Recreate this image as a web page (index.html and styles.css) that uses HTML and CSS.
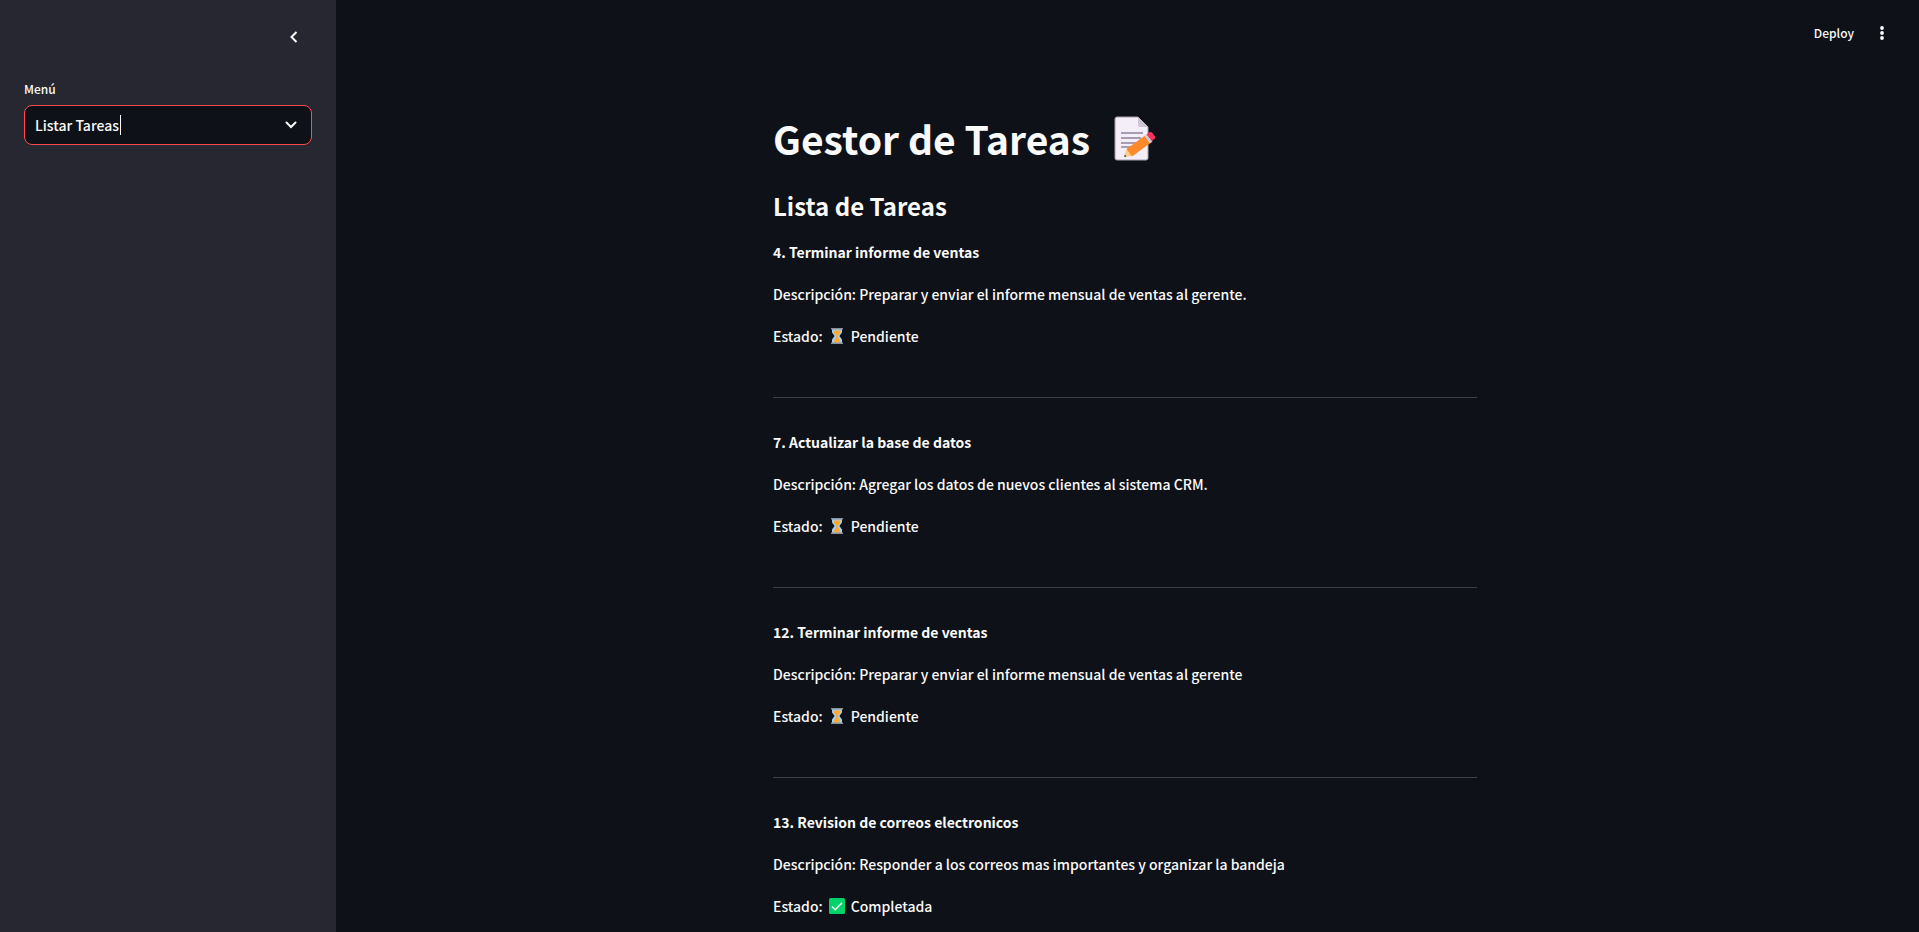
FILE: index.html
```html
<!DOCTYPE html>
<html lang="es">
<head>
<meta charset="utf-8">
<meta name="viewport" content="width=device-width, initial-scale=1">
<title>Gestor de Tareas</title>
<link rel="stylesheet" href="styles.css">
</head>
<body>
<svg class="defs" aria-hidden="true">
  <symbol id="hourglass" viewBox="0 0 16 18">
    <path d="M3 2h10v3.500L10.400 9l2.600 3.500V16H3v-3.500L5.600 9 3 5.500z" fill="#9fd0fa"/>
    <path d="M4.500 3.500h7v1.900L9 8.500v1.700l2 3.300v2H5v-2l2-3.300V8.500L4.500 5.400z" fill="#ffa92e"/>
    <path d="M2 1h12v1.500H2zM2 15.500h12V17H2z" fill="#8b9199"/>
  </symbol>
  <symbol id="check" viewBox="0 0 16 18">
    <rect x="0" y="1" width="16" height="16" rx="1.500" fill="#00d26a"/>
    <path d="M3 9.500l3.300 3.200L13 5.800" fill="none" stroke="#fff" stroke-width="1.600"/>
  </symbol>
</svg>
<div class="app">
  <aside class="sidebar">
    <div class="sidebar-header">
      <button class="icon-button" type="button" aria-label="Cerrar barra lateral">
        <svg width="20" height="20" viewBox="0 0 20 20"><path d="M12.500 5L7.500 10l5 5" fill="none" stroke="#fafafa" stroke-width="2"/></svg>
      </button>
    </div>
    <div class="field">
      <label for="menu">Menú</label>
      <div class="select-box">
        <select id="menu">
          <option selected>Listar Tareas</option>
          <option>Agregar Tarea</option>
        </select>
        <span class="caret"></span>
        <svg class="chevron" width="16" height="16" viewBox="0 0 16 16"><path d="M3.500 5.500L8 10l4.500-4.500" fill="none" stroke="#fafafa" stroke-width="2" stroke-linecap="round"/></svg>
      </div>
    </div>
  </aside>
  <div class="main">
    <header class="toolbar">
      <button class="deploy" type="button">Deploy</button>
      <button class="icon-button" type="button" aria-label="Menú principal">
        <svg width="20" height="20" viewBox="0 0 20 20" fill="#fafafa"><circle cx="10" cy="5" r="1.900"/><circle cx="10" cy="10" r="1.900"/><circle cx="10" cy="15" r="1.900"/></svg>
      </button>
    </header>
    <main class="content">
      <h1>Gestor de Tareas
        <svg class="memo" width="44" height="48" viewBox="0 0 44 48" role="img" aria-label="Nota">
          <path d="M4 2h21l10 10v31a2 2 0 0 1-2 2H4a2 2 0 0 1-2-2V4a2 2 0 0 1 2-2z" fill="#f3eef8" stroke="#a69fb0"/>
          <path d="M25 2l10 10H27a2 2 0 0 1-2-2z" fill="#cdc4d6"/>
          <path d="M8 18h22M8 23h20M8 28h15M8 32h10" stroke="#a79cb2" stroke-width="1.800"/>
          <path d="M11 42l3-9 5 8z" fill="#ffcf85"/>
          <path d="M11 42l1-2.500 1.500 2z" fill="#433b6b"/>
          <path d="M13.500 34L32 20.500l5.500 7.500L19 41.500z" fill="#ff8a2e"/>
          <path d="M31.500 21l2.500-2 5.500 7.500-2.500 2z" fill="#d3cdd8"/>
          <path d="M33.500 19.500l3-2.200c1-.7 2-.5 2.800.5l2.500 3.500c.7 1 .5 2-.5 2.800l-2.500 2z" fill="#f8315f"/>
        </svg>
      </h1>
      <h2>Lista de Tareas</h2>
      <section class="task">
        <p><strong>4. Terminar informe de ventas</strong></p>
        <p>Descripción: Preparar y enviar el informe mensual de ventas al gerente.</p>
        <p class="status">Estado: <svg class="emoji"><use href="#hourglass"/></svg> Pendiente</p>
      </section>
      <hr>
      <section class="task">
        <p><strong>7. Actualizar la base de datos</strong></p>
        <p>Descripción: Agregar los datos de nuevos clientes al sistema CRM.</p>
        <p class="status">Estado: <svg class="emoji"><use href="#hourglass"/></svg> Pendiente</p>
      </section>
      <hr>
      <section class="task">
        <p><strong>12. Terminar informe de ventas</strong></p>
        <p>Descripción: Preparar y enviar el informe mensual de ventas al gerente</p>
        <p class="status">Estado: <svg class="emoji"><use href="#hourglass"/></svg> Pendiente</p>
      </section>
      <hr>
      <section class="task">
        <p><strong>13. Revision de correos electronicos</strong></p>
        <p>Descripción: Responder a los correos mas importantes y organizar la bandeja</p>
        <p class="status">Estado: <svg class="emoji"><use href="#check"/></svg> Completada</p>
      </section>
    </main>
  </div>
</div>
</body>
</html>
```
FILE: styles.css
```css
* { box-sizing: border-box; }

body {
  margin: 0;
  background: #0e1117;
  color: #fafafa;
  font-family: "Noto Sans CJK SC", "Noto Sans", sans-serif;
  font-size: 14px;
  font-weight: 500;
  line-height: 26px;
}

button, select { font: inherit; color: inherit; }
h1, h2, p { margin: 0; }
strong { font-weight: 700; }

.defs { display: none; }

.app {
  display: flex;
  height: 100vh;
  overflow: hidden;
}

.sidebar {
  flex: 0 0 336px;
  padding: 23px 24px;
  background: #262730;
}

.sidebar-header {
  display: flex;
  justify-content: flex-end;
  padding-right: 4px;
  margin-bottom: 27px;
}

.icon-button {
  display: flex;
  padding: 4px;
  border: 0;
  background: none;
}

.field label {
  display: block;
  margin-bottom: 6px;
  font-size: 12px;
  line-height: 21px;
}

.select-box { position: relative; }

.select-box select {
  display: block;
  width: 100%;
  height: 40px;
  padding: 0 10px;
  border: 1px solid #ff4b4b;
  border-radius: 8px;
  background: #0e1117;
  appearance: none;
  outline: none;
}

.caret {
  position: absolute;
  left: 96px;
  top: 10px;
  width: 1px;
  height: 20px;
  background: #fafafa;
}

.chevron {
  position: absolute;
  right: 13px;
  top: 12px;
  pointer-events: none;
}

.main {
  flex: 1;
  min-width: 0;
  padding-right: 5px;
}

.toolbar {
  display: flex;
  justify-content: flex-end;
  align-items: center;
  gap: 14px;
  height: 66px;
  padding-right: 18px;
}

.deploy {
  padding: 0;
  border: 0;
  background: none;
  font-size: 12px;
}

.content {
  max-width: 704px;
  margin: 0 auto;
  padding-top: 46px;
}

h1 {
  display: flex;
  align-items: center;
  gap: 23px;
  font-size: 39px;
  line-height: 53px;
  font-weight: 700;
}

h2 {
  margin: 24px 0 16px;
  font-size: 24px;
  line-height: 34px;
  font-weight: 700;
}

.task {
  display: flex;
  flex-direction: column;
  gap: 16px;
}

.status {
  display: flex;
  align-items: center;
  gap: 6px;
}

.emoji {
  width: 16px;
  height: 18px;
}

hr {
  height: 1px;
  margin: 48px 0 31px;
  border: 0;
  background: #3d4044;
}
```
